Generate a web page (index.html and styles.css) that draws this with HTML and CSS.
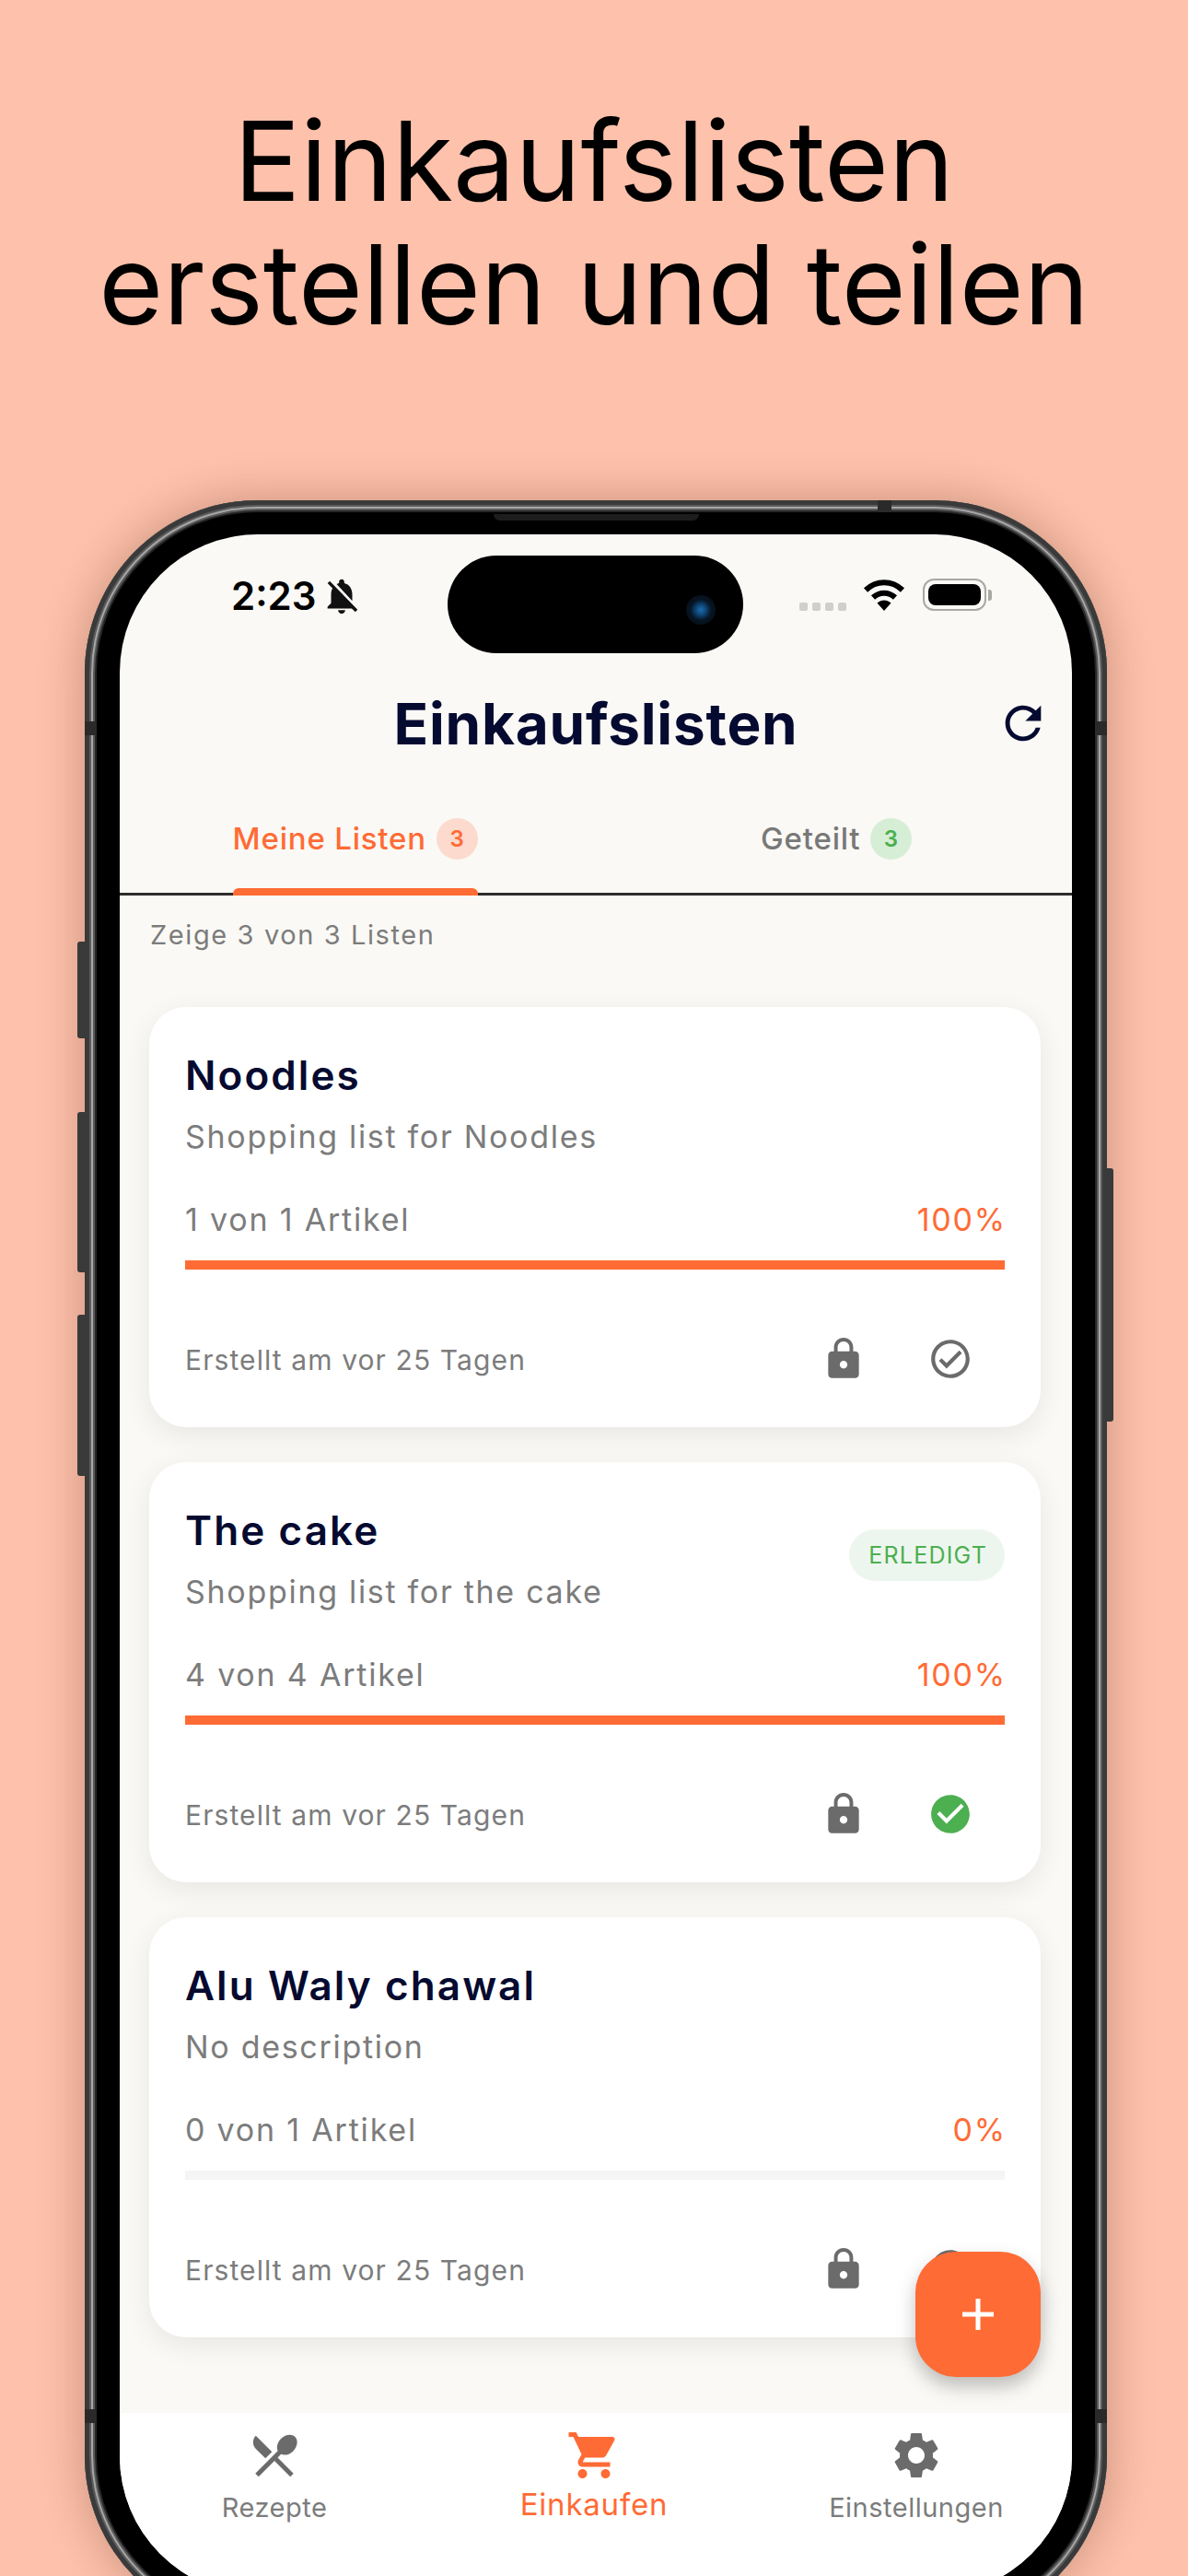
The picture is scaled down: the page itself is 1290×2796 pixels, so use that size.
FILE: index.html
```html
<!DOCTYPE html>
<html lang="de">
<head>
<meta charset="utf-8">
<title>Einkaufslisten</title>
<link rel="stylesheet" href="styles.css">
</head>
<body>
<div class="page">
  <h1 class="headline">Einkaufslisten<br>erstellen und teilen</h1>
  <div class="phone">
    <i class="side-btn btn-a"></i><i class="side-btn btn-b"></i><i class="side-btn btn-c"></i><i class="side-btn btn-d"></i>
    <i class="band band-l"></i><i class="band band-r"></i><i class="band band-t"></i><i class="band band-bl"></i><i class="band band-br"></i>
    <div class="bezel">
      <i class="speaker"></i>
      <div class="screen">
        <div class="island"><i class="camera"></i></div>
        <div class="statusbar">
          <span class="time">2:23</span>
          <svg class="bell" viewBox="0 0 24 24"><path d="M20 18.69L7.84 6.14 5.27 3.49 4 4.76l2.8 2.8v.01c-.52.99-.8 2.16-.8 3.42v5l-2 2v1h13.73l2 2L21 19.72l-1-1.03zM12 22c1.11 0 2-.89 2-2h-4c0 1.11.89 2 2 2zm6-7.32V11c0-3.08-1.64-5.64-4.5-6.32V4c0-.83-.67-1.5-1.5-1.5s-1.5.67-1.5 1.5v.68c-.15.03-.29.08-.42.12-.1.03-.2.07-.3.11h-.01c-.2.08-.4.17-.59.27-.01 0-.01 0-.02.01L18 14.68z"/></svg>
          <div class="status-right">
            <div class="dots"><i></i><i></i><i></i><i></i></div>
            <svg class="wifi" viewBox="0 0 46 35"><path class="wifi-arc" d="M3 12.5C14.5 1.5 31.5 1.5 43 12.5"/><path class="wifi-arc" d="M11 20.5C18 14 28 14 35 20.5"/><path d="M15.5 26.5C20 22.5 26 22.5 30.5 26.5L23 35z"/></svg>
            <div class="battery"><i class="battery-fill"></i></div>
            <i class="battery-tip"></i>
          </div>
        </div>
        <header class="appbar">
          <h2 class="appbar-title">Einkaufslisten</h2>
          <svg class="refresh" viewBox="0 0 24 24"><path d="M17.65 6.35C16.2 4.9 14.21 4 12 4c-4.42 0-7.99 3.58-7.99 8s3.57 8 7.99 8c3.73 0 6.84-2.55 7.73-6h-2.08c-.82 2.33-3.04 4-5.65 4-3.31 0-6-2.69-6-6s2.69-6 6-6c1.66 0 3.14.69 4.22 1.78L13 11h7V4l-2.35 2.35z"/></svg>
        </header>
        <nav class="tabs">
          <div class="tab tab-first"><div class="tab-inner active"><span>Meine Listen</span><b class="count count-orange">3</b></div></div>
          <div class="tab tab-second"><div class="tab-inner"><span>Geteilt</span><b class="count count-green">3</b></div></div>
        </nav>
        <main class="main">
          <p class="summary">Zeige 3 von 3 Listen</p>
          <section class="card">
            <div class="card-head">
              <div class="card-text">
                <h3 class="card-title">Noodles</h3>
                <p class="card-desc">Shopping list for Noodles</p>
              </div>
            </div>
            <div class="progress-row"><span>1 von 1 Artikel</span><span class="pct">100%</span></div>
            <div class="track"><div class="fill" style="width:100%"></div></div>
            <div class="card-foot">
              <span class="created">Erstellt am vor 25 Tagen</span>
              <svg class="foot-icon" viewBox="0 0 24 24"><path d="M18 8h-1V6c0-2.76-2.24-5-5-5S7 3.24 7 6v2H6c-1.1 0-2 .9-2 2v10c0 1.1.9 2 2 2h12c1.1 0 2-.9 2-2V10c0-1.1-.9-2-2-2zm-6 9c-1.1 0-2-.9-2-2s.9-2 2-2 2 .9 2 2-.9 2-2 2zm3.1-9H8.9V6c0-1.71 1.39-3.1 3.1-3.1 1.71 0 3.1 1.39 3.1 3.1v2z"/></svg>
              <svg class="foot-icon" viewBox="0 0 24 24"><path d="M12 2C6.48 2 2 6.48 2 12s4.48 10 10 10 10-4.48 10-10S17.52 2 12 2zm0 18c-4.41 0-8-3.59-8-8s3.59-8 8-8 8 3.59 8 8-3.59 8-8 8zm4.59-12.42L10 14.17l-2.59-2.58L6 13l4 4 8-8z"/></svg>
            </div>
          </section>
          <section class="card">
            <div class="card-head">
              <div class="card-text">
                <h3 class="card-title">The cake</h3>
                <p class="card-desc">Shopping list for the cake</p>
              </div>
              <span class="done-badge">ERLEDIGT</span>
            </div>
            <div class="progress-row"><span>4 von 4 Artikel</span><span class="pct">100%</span></div>
            <div class="track"><div class="fill" style="width:100%"></div></div>
            <div class="card-foot">
              <span class="created">Erstellt am vor 25 Tagen</span>
              <svg class="foot-icon" viewBox="0 0 24 24"><path d="M18 8h-1V6c0-2.76-2.24-5-5-5S7 3.24 7 6v2H6c-1.1 0-2 .9-2 2v10c0 1.1.9 2 2 2h12c1.1 0 2-.9 2-2V10c0-1.1-.9-2-2-2zm-6 9c-1.1 0-2-.9-2-2s.9-2 2-2 2 .9 2 2-.9 2-2 2zm3.1-9H8.9V6c0-1.71 1.39-3.1 3.1-3.1 1.71 0 3.1 1.39 3.1 3.1v2z"/></svg>
              <svg class="foot-icon icon-green" viewBox="0 0 24 24"><path d="M12 2C6.48 2 2 6.48 2 12s4.48 10 10 10 10-4.48 10-10S17.52 2 12 2zm-2 15l-5-5 1.41-1.41L10 14.17l7.59-7.59L19 8l-9 9z"/></svg>
            </div>
          </section>
          <section class="card">
            <div class="card-head">
              <div class="card-text">
                <h3 class="card-title">Alu Waly chawal</h3>
                <p class="card-desc">No description</p>
              </div>
            </div>
            <div class="progress-row"><span>0 von 1 Artikel</span><span class="pct">0%</span></div>
            <div class="track"><div class="fill" style="width:0%"></div></div>
            <div class="card-foot">
              <span class="created">Erstellt am vor 25 Tagen</span>
              <svg class="foot-icon" viewBox="0 0 24 24"><path d="M18 8h-1V6c0-2.76-2.24-5-5-5S7 3.24 7 6v2H6c-1.1 0-2 .9-2 2v10c0 1.1.9 2 2 2h12c1.1 0 2-.9 2-2V10c0-1.1-.9-2-2-2zm-6 9c-1.1 0-2-.9-2-2s.9-2 2-2 2 .9 2 2-.9 2-2 2zm3.1-9H8.9V6c0-1.71 1.39-3.1 3.1-3.1 1.71 0 3.1 1.39 3.1 3.1v2z"/></svg>
              <svg class="foot-icon" viewBox="0 0 24 24"><path d="M12 2C6.48 2 2 6.48 2 12s4.48 10 10 10 10-4.48 10-10S17.52 2 12 2zm0 18c-4.41 0-8-3.59-8-8s3.59-8 8-8 8 3.59 8 8-3.59 8-8 8zm4.59-12.42L10 14.17l-2.59-2.58L6 13l4 4 8-8z"/></svg>
            </div>
          </section>
          <button class="fab" type="button"><svg class="fab-plus" viewBox="0 0 34 34"><path d="M14.5 0h5v14.5H34v5H19.5V34h-5V19.5H0v-5h14.5z"/></svg></button>
        </main>
        <footer class="bottomnav">
          <div class="nav-item">
            <svg class="nav-icon" viewBox="0 0 24 24"><path d="M8.1 13.34l2.83-2.83L3.91 3.5c-1.56 1.56-1.56 4.09 0 5.66l4.19 4.18zm6.78-1.81c1.53.71 3.68.21 5.27-1.38 1.91-1.91 2.28-4.65.81-6.12-1.46-1.46-4.2-1.1-6.12.81-1.59 1.59-2.09 3.74-1.38 5.27L3.7 19.87l1.41 1.41L12 14.41l6.88 6.88 1.41-1.41L13.41 13l1.47-1.47z"/></svg>
            <span class="nav-label">Rezepte</span>
          </div>
          <div class="nav-item nav-active">
            <svg class="nav-icon" viewBox="0 0 24 24"><path d="M7 18c-1.1 0-1.99.9-1.99 2S5.9 22 7 22s2-.9 2-2-.9-2-2-2zM1 2v2h2l3.6 7.59-1.35 2.45c-.16.28-.25.61-.25.96 0 1.1.9 2 2 2h12v-2H7.42c-.14 0-.25-.11-.25-.25l.03-.12.9-1.63h7.45c.75 0 1.41-.41 1.75-1.03l3.58-6.49c.08-.14.12-.31.12-.48 0-.55-.45-1-1-1H5.21l-.94-2H1zm16 16c-1.1 0-1.99.9-1.99 2s.89 2 1.99 2 2-.9 2-2-.9-2-2-2z"/></svg>
            <span class="nav-label">Einkaufen</span>
          </div>
          <div class="nav-item nav-last">
            <svg class="nav-icon" viewBox="0 0 24 24"><path d="M19.14 12.94c.04-.3.06-.61.06-.94 0-.32-.02-.64-.07-.94l2.03-1.58c.18-.14.23-.41.12-.61l-1.92-3.32c-.12-.22-.37-.29-.59-.22l-2.39.96c-.5-.38-1.03-.7-1.62-.94l-.36-2.54c-.04-.24-.24-.41-.48-.41h-3.84c-.24 0-.43.17-.47.41l-.36 2.54c-.59.24-1.13.57-1.62.94l-2.39-.96c-.22-.08-.47 0-.59.22L2.74 8.87c-.12.21-.08.47.12.61l2.03 1.58c-.05.3-.09.63-.09.94s.02.64.07.94l-2.03 1.58c-.18.14-.23.41-.12.61l1.92 3.32c.12.22.37.29.59.22l2.39-.96c.5.38 1.03.7 1.62.94l.36 2.54c.05.24.24.41.48.41h3.84c.24 0 .44-.17.47-.41l.36-2.54c.59-.24 1.13-.56 1.62-.94l2.39.96c.22.08.47 0 .59-.22l1.92-3.32c.12-.22.07-.47-.12-.61l-2.01-1.58zM12 15.6c-1.98 0-3.6-1.62-3.6-3.6s1.62-3.6 3.6-3.6 3.6 1.62 3.6 3.6-1.62 3.6-3.6 3.6z"/></svg>
            <span class="nav-label">Einstellungen</span>
          </div>
        </footer>
      </div>
    </div>
  </div>
</div>
</body>
</html>
```
FILE: styles.css
```css
* { box-sizing: border-box; }
html, body { margin: 0; padding: 0; }
body { font-family: "Inter", "Liberation Sans", sans-serif; }
h1, h2, h3, p { margin: 0; }

.page {
  width: 1290px;
  height: 2796px;
  overflow: hidden;
  background: #fec1ab;
  padding-top: 108px;
}
.headline {
  font-size: 120px;
  line-height: 134px;
  font-weight: 400;
  text-align: center;
  color: #000;
}

/* device */
.phone {
  position: relative;
  width: 1110px;
  height: 2310px;
  margin: 167px 0 0 92px;
  padding: 13px;
  border-radius: 188px;
  background: #262626;
  box-shadow: inset 0 0 0 5px #3a3a3a, inset 0 0 0 7px #5c5c5c, inset 0 0 0 9px #a6a6a6, inset 0 0 0 11px #5a5a5a, 0 0 50px rgba(60, 20, 0, .28);
}
.bezel {
  position: relative;
  height: 100%;
  padding: 24px 25px;
  border-radius: 175px;
  background: #000;
}
.speaker {
  position: absolute;
  left: 431px;
  top: 2px;
  width: 223px;
  height: 7px;
  border-radius: 0 0 8px 8px;
  background: #1d1d1d;
}
.side-btn { position: absolute; width: 9px; background: #3a3a3a; border-radius: 3px 0 0 3px; left: -8px; }
.btn-a { top: 479px; height: 105px; }
.btn-b { top: 664px; height: 174px; }
.btn-c { top: 884px; height: 175px; }
.btn-d { left: auto; right: -7px; top: 725px; height: 275px; width: 8px; border-radius: 0 3px 3px 0; }
.band { position: absolute; background: #2a2a2a; }
.band-l { left: 0; top: 240px; width: 13px; height: 15px; }
.band-r { right: 0; top: 240px; width: 13px; height: 15px; }
.band-t { left: 861px; top: 0; width: 15px; height: 13px; }
.band-bl { left: 0; top: 2072px; width: 13px; height: 15px; }
.band-br { right: 0; top: 2072px; width: 13px; height: 15px; }

.screen {
  position: relative;
  display: flex;
  flex-direction: column;
  height: 100%;
  overflow: hidden;
  border-radius: 150px;
  background: #faf9f5;
}
.island {
  position: absolute;
  left: 356px;
  top: 23px;
  width: 321px;
  height: 106px;
  border-radius: 53px;
  background: #000;
}
.camera {
  position: absolute;
  left: 259px;
  top: 43px;
  width: 32px;
  height: 32px;
  border-radius: 50%;
  background: radial-gradient(circle, #1d6fb0 0, #0c3f6e 28%, #071523 50%, #050a10 100%);
}

/* status bar */
.statusbar {
  display: flex;
  align-items: flex-start;
  height: 160px;
  padding: 48px 87px 0 121px;
}
.time { font-size: 42px; line-height: 38px; font-weight: 600; color: #000; }
.bell { width: 46px; height: 46px; margin: -4px 0 0 5px; fill: #111; }
.status-right { display: flex; align-items: flex-start; margin-left: auto; }
.dots { display: flex; gap: 5px; margin: 26px 18px 0 0; }
.dots i { width: 9px; height: 9px; border-radius: 2px; background: #cfcfcc; }
.wifi { width: 46px; height: 35px; fill: #000; margin-right: 19px; }
.wifi-arc { fill: none; stroke: #000; stroke-width: 6; }
.battery {
  width: 69px;
  height: 35px;
  padding: 4px;
  border: 2px solid #a8a8a4;
  border-radius: 12px;
}
.battery-fill { display: block; height: 100%; border-radius: 8px; background: #000; }
.battery-tip { width: 4px; height: 12px; margin: 12px 0 0 2px; border-radius: 0 3px 3px 0; background: #a8a8a4; }

/* app bar */
.appbar {
  position: relative;
  display: flex;
  align-items: center;
  justify-content: center;
  height: 90px;
  padding-top: 2px;
}
.appbar-title { font-size: 62px; line-height: 90px; font-weight: 700; letter-spacing: .8px; color: #050a30; }
.refresh { position: absolute; left: 952px; top: 16px; width: 58px; height: 58px; fill: #050a30; }

/* tabs */
.tabs {
  display: flex;
  height: 142px;
  padding-top: 21px;
  border-bottom: 3px solid #2c2c2c;
}
.tab { flex: 1; display: flex; justify-content: center; }
.tab-first { padding-right: 5px; }
.tab-second { padding-left: 6px; }
.tab-inner {
  position: relative;
  display: flex;
  align-items: center;
  gap: 11px;
  height: 100%;
  font-size: 33px;
  font-weight: 500;
  letter-spacing: .8px;
  color: #787878;
}
.tab-inner.active { color: #ff6b35; }
.tab-inner.active::after {
  content: "";
  position: absolute;
  left: 0;
  right: 0;
  bottom: -3px;
  height: 8px;
  border-radius: 6px 6px 0 0;
  background: #ff6b35;
}
.count {
  display: flex;
  align-items: center;
  justify-content: center;
  width: 45px;
  height: 45px;
  border-radius: 50%;
  font-size: 24px;
  font-weight: 600;
}
.count-orange { background: #fcdacd; color: #ff6b35; }
.count-green { background: #d7eed6; color: #4caf50; }

/* list */
.main {
  position: relative;
  flex: 1;
  padding: 0 34px 0 32px;
  overflow: hidden;
}
.summary {
  height: 88px;
  margin: 0 0 33px 1px;
  font-size: 29px;
  line-height: 86px;
  letter-spacing: 1.6px;
  color: #7c7c7c;
}
.card {
  height: 456px;
  margin-bottom: 38px;
  padding: 46px 39px 0;
  border-radius: 40px;
  background: #fff;
  box-shadow: 0 8px 30px rgba(0, 0, 0, .08);
}
.card-head { display: flex; align-items: center; justify-content: space-between; }
.card-text { flex: 1; }
.card-title { font-size: 44px; line-height: 56px; font-weight: 600; letter-spacing: 2.1px; color: #050a30; }
.card-desc { margin-top: 17px; font-size: 34px; line-height: 44px; letter-spacing: 1.7px; color: #7c7c7c; }
.done-badge {
  display: flex;
  align-items: center;
  height: 56px;
  margin-top: -8px;
  padding: 0 19px 0 21px;
  border-radius: 28px;
  background: #edf6ee;
  font-size: 25px;
  letter-spacing: 1.2px;
  color: #4caf50;
}
.progress-row {
  display: flex;
  justify-content: space-between;
  margin-top: 46px;
  font-size: 34px;
  line-height: 44px;
  letter-spacing: 1.8px;
  color: #7c7c7c;
}
.pct { margin-right: -2px; color: #ff6b35; }
.track { height: 10px; margin-top: 22px; background: #f5f5f5; }
.fill { height: 100%; background: #ff6b35; }
.card-foot { display: flex; align-items: center; gap: 66px; height: 50px; margin-top: 72px; padding-right: 34px; }
.created { flex: 1; padding-top: 2px; font-size: 30px; letter-spacing: 1.1px; color: #7c7c7c; }
.foot-icon { width: 50px; height: 50px; fill: #6b6b6b; }
.icon-green { fill: #4caf50; }

.fab {
  position: absolute;
  right: 34px;
  bottom: 39px;
  display: flex;
  align-items: center;
  justify-content: center;
  width: 136px;
  height: 136px;
  padding: 0;
  border: 0;
  border-radius: 44px;
  background: #ff6b35;
  box-shadow: 0 10px 20px rgba(0, 0, 0, .25);
}
.fab-plus { width: 34px; height: 34px; fill: #fff; }

/* bottom nav */
.bottomnav {
  display: grid;
  grid-template-columns: 336px 354px 344px;
  height: 197px;
  padding-top: 16px;
  background: #fff;
}
.nav-item {
  display: flex;
  flex-direction: column;
  align-items: center;
  color: #7c7c7c;
}
.nav-icon { width: 60px; height: 60px; fill: #6b6b6b; }
.nav-label { margin-top: 7px; font-size: 29px; line-height: 40px; letter-spacing: .5px; }
.nav-active { padding-left: 4px; color: #ff6b35; }
.nav-active .nav-icon { fill: #ff6b35; }
.nav-active .nav-label { margin-top: 3px; font-size: 33px; letter-spacing: .8px; }
.nav-last { padding-left: 6px; }
```
